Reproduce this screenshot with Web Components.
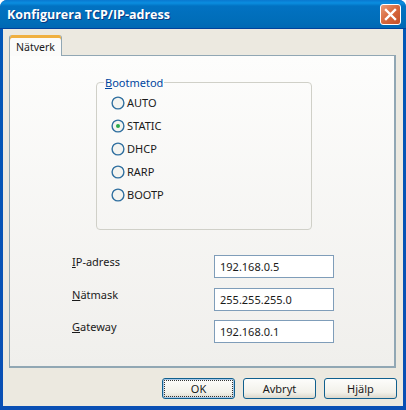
<!DOCTYPE html>
<html>
<head>
<meta charset="utf-8">
<title>Konfigurera TCP/IP-adress</title>
<style>
  html, body { margin: 0; padding: 0; background: #fff; }
  body { font: 11px "Noto Sans", "Liberation Sans", sans-serif; color: #1a1a1a; }
  u { text-decoration: underline; }
</style>
</head>
<body>

<xp-window heading="Konfigurera TCP/IP-adress">
  <xp-tabs label="Nätverk">
    <xp-group>
      <span slot="legend"><u>B</u>ootmetod</span>
      <xp-radio>AUTO</xp-radio>
      <xp-radio checked>STATIC</xp-radio>
      <xp-radio>DHCP</xp-radio>
      <xp-radio>RARP</xp-radio>
      <xp-radio>BOOTP</xp-radio>
    </xp-group>
    <xp-field value="192.168.0.5"><u>I</u>P-adress</xp-field>
    <xp-field value="255.255.255.0"><u>N</u>ätmask</xp-field>
    <xp-field value="192.168.0.1"><u>G</u>ateway</xp-field>
  </xp-tabs>
  <xp-button slot="buttons" focused>OK</xp-button>
  <xp-button slot="buttons">Avbryt</xp-button>
  <xp-button slot="buttons">Hjälp</xp-button>
</xp-window>

<script>
class XpWindow extends HTMLElement {
  constructor() {
    super();
    this.attachShadow({mode: 'open'}).innerHTML = `<style>
      :host { display: flex; flex-direction: column; width: 406px; height: 410px; box-sizing: border-box;
        background: linear-gradient(#0058b8, #0a4fb4); border-radius: 7px 7px 0 0; overflow: hidden; }
      .title { height: 29px; flex: none; display: flex; align-items: center; justify-content: space-between;
        padding: 0 5px 0 7px; box-sizing: border-box; border-bottom: 1px solid #00429c;
        background: linear-gradient(#0a78d0 0, #0a8ee0 3px, #0272c2 6px, #006db8 22px, #0068b4 100%); }
      .title span { color: #fff; font: bold 12.5px "Open Sans", "DejaVu Sans", sans-serif; text-shadow: 1px 1px 0 #0a3a80; }
      .close { width: 21px; height: 21px; box-sizing: border-box; border: 1px solid #fff; border-radius: 3px;
        background: linear-gradient(135deg, #e89a78, #d8683c 50%, #c2502a); display: block; }
      .body { flex: 1; display: flex; flex-direction: column; margin: 0 3px 4px 3px; background: #ece9e0;
        padding: 6px 7px 0 6px; min-height: 0; }
      .buttons { display: flex; justify-content: flex-end; gap: 8px; margin: 10px -1px 0 0; }
    </style>
    <div class="title">
      <span></span>
      <svg class="close" viewBox="0 0 19 19"><path d="M5 5l9 9M14 5l-9 9" stroke="#fff" stroke-width="2.4" stroke-linecap="square" fill="none"/></svg>
    </div>
    <div class="body">
      <slot></slot>
      <div class="buttons"><slot name="buttons"></slot></div>
    </div>`;
  }
  connectedCallback() {
    this.shadowRoot.querySelector('.title span').textContent = this.getAttribute('heading');
  }
}

class XpTabs extends HTMLElement {
  constructor() {
    super();
    this.attachShadow({mode: 'open'}).innerHTML = `<style>
      :host { display: block; }
      .tab { width: 53px; height: 21px; box-sizing: border-box; background: #fbfbfa; border: 1px solid #91a7b4;
        border-bottom: 0; border-top: 0; border-radius: 3px 3px 0 0; box-shadow: inset 0 3px 0 #f0b040;
        font-size: 10.5px; display: flex; align-items: center; justify-content: center; padding-top: 3px;
        position: relative; z-index: 1; margin-bottom: -1px; }
      .pane { height: 313px; box-sizing: border-box; border: 1px solid #91a7b4; border-width: 1px 2px 2px 1px;
        background: linear-gradient(#fdfdfc, #f0efec); padding: 20px 0 0 62px; }
    </style>
    <div class="tab"></div>
    <div class="pane"><slot></slot></div>`;
  }
  connectedCallback() {
    this.shadowRoot.querySelector('.tab').textContent = this.getAttribute('label');
  }
}

class XpGroup extends HTMLElement {
  constructor() {
    super();
    this.attachShadow({mode: 'open'}).innerHTML = `<style>
      :host { display: block; margin: 0 0 25px 24px; width: 216px; }
      fieldset { margin: 0; padding: 0 0 0 14px; height: 154px; box-sizing: border-box;
        border: 1px solid #d0d0c8; border-radius: 4px; display: flex; flex-direction: column; }
      legend { padding: 0 1px; margin-left: -7px; color: #0046a0; font-size: 11px; line-height: 13px; }
      .list { display: flex; flex-direction: column; gap: 8px; margin-top: 6px; }
    </style>
    <fieldset>
      <legend><slot name="legend"></slot></legend>
      <div class="list"><slot></slot></div>
    </fieldset>`;
  }
}

class XpRadio extends HTMLElement {
  constructor() {
    super();
    this.attachShadow({mode: 'open'}).innerHTML = `<style>
      :host { display: flex; align-items: center; height: 15px; gap: 2px; font-size: 11px; }
      svg { width: 14px; height: 14px; flex: none; }
    </style>
    <svg viewBox="0 0 14 14">
      <circle cx="7" cy="7" r="5.9" fill="#f4f4f0" stroke="#2f6f9f" stroke-width="1.4"/>
      <circle class="dot" cx="7" cy="7" r="2" fill="#2aa84a"/>
    </svg>
    <slot></slot>`;
  }
  connectedCallback() {
    if (!this.hasAttribute('checked')) this.shadowRoot.querySelector('.dot').remove();
  }
}

class XpField extends HTMLElement {
  constructor() {
    super();
    this.attachShadow({mode: 'open'}).innerHTML = `<style>
      :host { display: flex; align-items: flex-start; height: 32.5px; font-size: 11px; }
      .label { width: 142px; flex: none; margin-top: -1px; }
      .box { width: 120px; height: 23px; flex: none; box-sizing: border-box; border: 1px solid #7f9db9; background: #fff;
        padding: 4px 0 0 5px; line-height: 14px; font-size: 11px; }
    </style>
    <div class="label"><slot></slot></div>
    <div class="box"></div>`;
  }
  connectedCallback() {
    this.shadowRoot.querySelector('.box').textContent = this.getAttribute('value');
  }
}

class XpButton extends HTMLElement {
  constructor() {
    super();
    this.attachShadow({mode: 'open'}).innerHTML = `<style>
      :host { display: block; }
      .btn { width: 73px; height: 21px; box-sizing: border-box; border: 1px solid #10608e; border-radius: 3px;
        background: linear-gradient(#fdfdfb, #f2f1ea 70%, #dcd8cc); display: flex; align-items: center;
        justify-content: center; font-size: 11px; }
      .focused { box-shadow: inset 0 0 0 1px #a8c8e8; outline: 1px dotted #333; outline-offset: -3px; }
    </style>
    <div class="btn"><slot></slot></div>`;
  }
  connectedCallback() {
    if (this.hasAttribute('focused')) this.shadowRoot.querySelector('.btn').classList.add('focused');
  }
}

customElements.define('xp-window', XpWindow);
customElements.define('xp-tabs', XpTabs);
customElements.define('xp-group', XpGroup);
customElements.define('xp-radio', XpRadio);
customElements.define('xp-field', XpField);
customElements.define('xp-button', XpButton);
</script>
</body>
</html>
